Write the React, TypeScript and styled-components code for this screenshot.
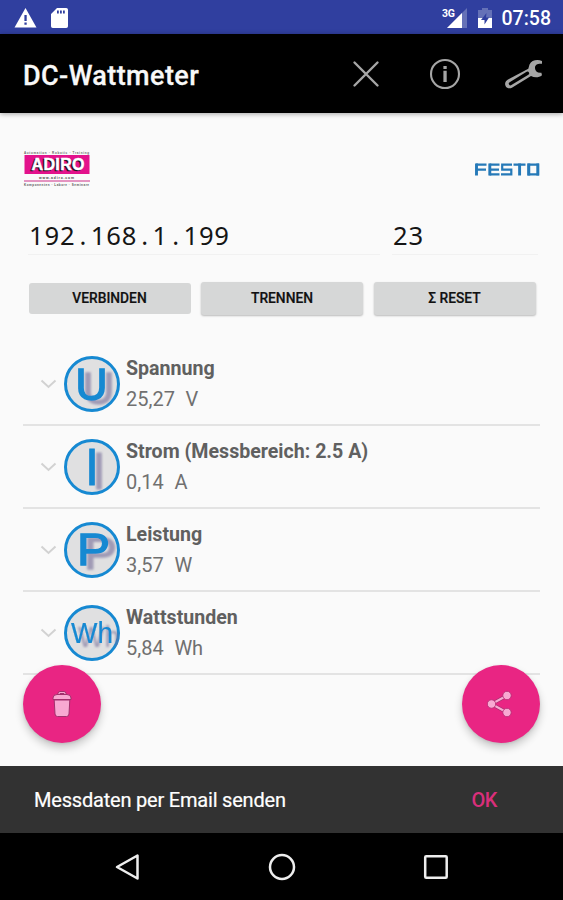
import React from "react";
import styled, { createGlobalStyle } from "styled-components";

const GlobalStyle = createGlobalStyle`
  * { box-sizing: border-box; }
  body { margin: 0; background: #fafafa; font-family: Roboto, sans-serif; }
`;

const Screen = styled.div`
  width: 563px;
  height: 900px;
  display: flex;
  flex-direction: column;
  background: #fafafa;
  overflow: hidden;
`;

const StatusBar = styled.header`
  height: 34px;
  flex: none;
  display: flex;
  align-items: center;
  justify-content: space-between;
  padding: 2px 12px 0 14px;
  background: #303f9f;
`;

const StatusIcons = styled.div<{ $gap: number }>`
  display: flex;
  align-items: center;
  gap: ${(p) => p.$gap}px;
`;

const Clock = styled.span`
  color: #fff;
  font-size: 19.5px;
  font-weight: 500;
  line-height: 24px;
  padding-top: 2px;
`;

const AppBar = styled.div`
  height: 79px;
  flex: none;
  display: flex;
  align-items: center;
  justify-content: space-between;
  padding: 0 20px 0 23px;
  background: #000;
  box-shadow: 0 1px 5px rgba(0, 0, 0, 0.35);
  z-index: 1;
`;

const Title = styled.h1`
  margin: 4px 0 0;
  color: #f8f8f8;
  font-size: 27px;
  font-weight: 500;
  line-height: 32px;
  letter-spacing: 0.4px;
  -webkit-text-stroke: 0.3px #f8f8f8;
`;

const Actions = styled.div`
  display: flex;
  align-items: center;
`;

const IconButton = styled.button`
  width: 79px;
  display: flex;
  justify-content: center;
  padding: 0;
  border: 0;
  background: none;

  &:last-child { margin-right: -20px; }
`;

const Content = styled.main`
  flex: 1;
  position: relative;
  padding: 37px 23px 0;
`;

const Logos = styled.div`
  height: 38px;
  display: flex;
  align-items: center;
  justify-content: space-between;
`;

const Fields = styled.div`
  display: grid;
  grid-template-columns: 352px 146px;
  gap: 12px;
  margin-top: 28px;
  padding-left: 5px;
`;

const Field = styled.div`
  height: 39px;
  border-bottom: 1px solid #f1f1f1;
  padding: 2px 0 0 1px;
  color: #151515;
  font-family: "Noto Sans", sans-serif;
  font-size: 25.6px;
  line-height: 36px;
  letter-spacing: 0.8px;
  white-space: nowrap;
`;

const Dot = styled.span`
  padding: 0 3.6px 0 4.2px;
`;

const Buttons = styled.div`
  display: grid;
  grid-template-columns: repeat(3, 162px);
  gap: 10.5px;
  margin: 27px 0 0 5.5px;
`;

const ActionButton = styled.button<{ $raised?: boolean }>`
  height: ${(p) => (p.$raised ? 33 : 31)}px;
  margin-top: ${(p) => (p.$raised ? 0 : 1)}px;
  padding: 0;
  border: 0;
  border-radius: 3px;
  background: #d6d7d7;
  box-shadow: ${(p) => (p.$raised ? "0 1px 2px rgba(0,0,0,0.26)" : "none")};
  color: #111;
  font-family: Roboto, sans-serif;
  font-size: 13.8px;
  font-weight: 500;
  line-height: 31px;
  -webkit-text-stroke: 0.2px #111;
`;

const List = styled.ul`
  margin: 28px 0 0;
  padding: 0;
  list-style: none;
`;

const Row = styled.li`
  height: 83px;
  display: flex;
  align-items: center;
  padding-left: 17px;
  border-bottom: 2px solid #e3e3e3;
`;

const Reading = styled.div`
  margin-left: 6px;
  font-size: 20px;
  line-height: 30px;
  white-space: pre;
`;

const Name = styled.div`
  color: #606060;
  font-weight: 700;
  font-size: 19.6px;
`;

const Value = styled.div`
  color: #707070;
  font-size: 20px;
  word-spacing: 0.4px;
`;

const BadgeIcon = styled.svg`
  margin-left: 7px;
  flex: none;
`;

const Fab = styled.button<{ $side: "left" | "right" }>`
  position: absolute;
  top: 551.5px;
  ${(p) => p.$side}: 23px;
  width: 78px;
  height: 78px;
  display: flex;
  align-items: center;
  justify-content: center;
  padding: 0;
  border: 0;
  border-radius: 50%;
  background: #e92583;
  box-shadow: 0 5px 8px rgba(0, 0, 0, 0.2), 0 1px 3px rgba(0, 0, 0, 0.1);
`;

const Snackbar = styled.div`
  height: 67px;
  flex: none;
  display: flex;
  align-items: center;
  justify-content: space-between;
  padding: 1px 66px 0 34px;
  background: #323232;
  color: #fff;
  font-size: 20px;
  line-height: 26px;
`;

const Message = styled.span`
  letter-spacing: -0.2px;
  -webkit-text-stroke: 0.2px #fff;
`;

const Confirm = styled.button`
  padding: 0;
  border: 0;
  background: none;
  color: #d92f7b;
  font-family: Roboto, sans-serif;
  font-size: 20px;
  font-weight: 500;
  line-height: 26px;
  letter-spacing: -0.5px;
`;

const NavBar = styled.nav`
  height: 67px;
  flex: none;
  display: flex;
  align-items: center;
  justify-content: space-between;
  padding: 0 113px;
  background: #000;
`;

const WarningIcon = () => (
  <svg width="23" height="22" viewBox="0 0 23 22">
    <path d="M11.5 1L22.5 20.5H.5z" fill="#fff" />
    <path d="M10.4 8h2.3v6h-2.3zM10.4 15.5h2.3v2.3h-2.3z" fill="#303f9f" />
  </svg>
);

const CardIcon = () => (
  <svg width="17" height="22" viewBox="0 0 17 22">
    <path d="M6 1h9.2Q17 1 17 2.8v16.4q0 1.8-1.8 1.8H1.8Q0 21 0 19.2V7z" fill="#fff" />
    <path d="M6 3.5h1.8v3H6zM9 3.5h1.8v3H9zM12 3.5h1.8v3H12z" fill="#303f9f" />
  </svg>
);

const SignalIcon = () => (
  <svg width="26" height="24" viewBox="0 0 26 24">
    <path d="M25 2v20H5z" fill="#6571b7" />
    <path d="M20 7v15H5z" fill="#fff" />
    <text x="0" y="10.5" fontFamily="Roboto, sans-serif" fontSize="10.5" fontWeight="700" fill="#fff" textLength="13">3G</text>
  </svg>
);

const BatteryIcon = () => (
  <svg width="14" height="22" viewBox="0 0 14 22">
    <path d="M4 1h6v2h4v8H0V3h4z" fill="#6571b7" />
    <path d="M0 11h14v10H0z" fill="#fff" />
    <path d="M8.5 6L3 13h3.5v4.5L11 10.5H8z" fill="#303f9f" />
  </svg>
);

const CloseIcon = () => (
  <svg width="28" height="28" viewBox="0 0 28 28" stroke="#a6a6a6" strokeWidth="2.4" strokeLinecap="round">
    <path d="M2.5 2.5l23 23M25.5 2.5l-23 23" />
  </svg>
);

const InfoIcon = () => (
  <svg width="32" height="32" viewBox="0 0 32 32">
    <circle cx="16" cy="16" r="14" fill="none" stroke="#a6a6a6" strokeWidth="2.1" />
    <path d="M14.4 8h3.3v3h-3.3zM14.4 12.8h3.3V24h-3.3z" fill="#a6a6a6" />
  </svg>
);

const WrenchIcon = () => (
  <svg width="40" height="30" viewBox="0 0 40 30">
    <path
      d="M38 2C33.5 .2 27.5 1 25.5 5.5L24.3 9.800 4 20.500C1.200 22.300 .4 24.800 1.700 27.200c1.300 2.200 4 2.700 6.600 1.200L27 17c3.500 1.900 8 1.700 11-.8l-.6-2.400c-4 .5-6.200-1.600-6.400-4.600-.2-3.200 2-4.800 7-4.500z"
      fill="#a6a6a6"
    />
    <path d="M6.500 24.600L23.500 14.300" stroke="#000" strokeWidth="3.4" strokeLinecap="round" />
  </svg>
);

const AdiroLogo = () => (
  <svg width="67" height="38" viewBox="0 0 67 38" fontFamily="Liberation Sans, sans-serif">
    <text x="1" y="3.7" fontSize="3" fontWeight="700" fill="#666" textLength="65">Automation · Robotic · Training</text>
    <rect x="1.5" y="5" width="65" height="19" fill="#e3128c" />
    <g fontSize="16" fontWeight="700" strokeWidth=".5">
      <text transform="translate(7 21)" fill="#241020" stroke="#241020" textLength="53">ADIRO</text>
      <text transform="translate(8.5 19.5)" fill="#fff" stroke="#fff" textLength="53">ADIRO</text>
    </g>
    <text x="16" y="28.5" fontSize="3.4" fontWeight="700" fill="#444" textLength="35">www.adiro.com</text>
    <path d="M1 31h66" stroke="#dc72ae" strokeWidth="1.3" />
    <text x="1" y="36" fontSize="3" fontWeight="700" fill="#555" textLength="65">Komponenten · Labore · Seminare</text>
  </svg>
);

const FestoLogo = () => (
  <svg width="66" height="13" viewBox="0 0 66 13" role="img" aria-label="FESTO" fill="none" stroke="#2579b8">
    <path
      strokeWidth="2.2"
      d="M2 1.700h10.500M3 6.700h9M15.500 1.700h10M15.500 6.700h9.500M15.500 11.300h10M38 1.700H28.200v5H37.300v4.600H27M39.500 1.700h12M54.500 1.700H64v9.600H54.500z"
    />
    <path strokeWidth="2.9" d="M2.500 .6V12.400M15.800 .6v11.800M45.600 .6V12.400M54.800 .6v11.800M63.800 .6v11.800" />
  </svg>
);

const Chevron = () => (
  <svg width="17" height="11" viewBox="0 0 17 11">
    <path d="M1.5 2.5l7 6.500 7-6.500" fill="none" stroke="#d2d2d2" strokeWidth="2" />
  </svg>
);

type Glyph = "U" | "I" | "P" | "Wh";

const glyphStyle: Record<Glyph, { size: number; x: number; y: number; width: number; bold: number }> = {
  U: { size: 45, x: 11.5, y: 45, width: 32, bold: 1.6 },
  I: { size: 51, x: 21, y: 47, width: 14, bold: 0.8 },
  P: { size: 44, x: 13, y: 44, width: 33, bold: 1.4 },
  Wh: { size: 29, x: 7, y: 39, width: 42, bold: 0.2 },
};

const Badge = ({ glyph }: { glyph: Glyph }) => {
  const g = glyphStyle[glyph];
  const id = `badge-${glyph}`;
  return (
    <BadgeIcon width="56" height="58" viewBox="0 0 56 58">
      <defs>
        <filter id={id} x="-20%" y="-20%" width="180%" height="150%">
          <feDropShadow dx="7" dy="4" stdDeviation="1.2" floodColor="#746c98" floodOpacity=".6" />
        </filter>
        <clipPath id={`${id}-clip`}><circle cx="28" cy="29" r="28" /></clipPath>
      </defs>
      <circle cx="28" cy="29" r="26.5" fill="#e0e0e1" stroke="#1689d2" strokeWidth="3" />
      <g clipPath={`url(#${id}-clip)`}>
        <text
          x={g.x}
          y={g.y}
          fontFamily="Liberation Sans, sans-serif"
          fontSize={g.size}
          fill="#1689d2"
          stroke="#1689d2"
          strokeWidth={g.bold}
          textLength={g.width}
          lengthAdjust="spacingAndGlyphs"
          filter={`url(#${id})`}
        >
          {glyph}
        </text>
      </g>
    </BadgeIcon>
  );
};

const TrashIcon = () => (
  <svg width="20" height="28" viewBox="0 0 20 28" fill="#f8a9d2" stroke="#a2316d" strokeWidth="1">
    <path d="M6 5V3.5Q6 1.500 8 1.500h4q2 0 2 2V5h-2V3.500H8V5z" />
    <path d="M2.200 10h15.600L17 24q-.2 2.500-2.500 2.500H5.500q-2.300 0-2.500-2.500z" />
    <path d="M1 9.500V8q0-3.500 4-3.500h10q4 0 4 3.500v1.500z" />
  </svg>
);

const ShareIcon = () => (
  <svg width="28" height="28" viewBox="0 0 28 28" fill="#f8a9d2">
    <path d="M20 5.5L4.500 14 20 22.500" fill="none" stroke="#a2316d" strokeWidth="3.5" />
    <path d="M20 5.5L4.500 14 20 22.500" fill="none" stroke="#f8a9d2" strokeWidth="2" />
    <g stroke="#b32670" strokeWidth=".8">
      <circle cx="4.5" cy="14" r="4.2" />
      <circle cx="20" cy="5.5" r="4.2" />
      <circle cx="20" cy="22.5" r="4.2" />
    </g>
  </svg>
);

const readings: { glyph: Glyph; name: string; value: string }[] = [
  { glyph: "U", name: "Spannung", value: "25,27  V" },
  { glyph: "I", name: "Strom (Messbereich: 2.5 A)", value: "0,14  A" },
  { glyph: "P", name: "Leistung", value: "3,57  W" },
  { glyph: "Wh", name: "Wattstunden", value: "5,84  Wh" },
];

export default function App() {
  return (
    <>
      <GlobalStyle />
      <Screen>
        <StatusBar>
          <StatusIcons $gap={14}><WarningIcon /><CardIcon /></StatusIcons>
          <StatusIcons $gap={10}><SignalIcon /><BatteryIcon /><Clock>07:58</Clock></StatusIcons>
        </StatusBar>
        <AppBar>
          <Title>DC-Wattmeter</Title>
          <Actions>
            <IconButton aria-label="Schließen"><CloseIcon /></IconButton>
            <IconButton aria-label="Info"><InfoIcon /></IconButton>
            <IconButton aria-label="Einstellungen"><WrenchIcon /></IconButton>
          </Actions>
        </AppBar>
        <Content>
          <Logos><AdiroLogo /><FestoLogo /></Logos>
          <Fields>
            <Field>192<Dot>.</Dot>168<Dot>.</Dot>1<Dot>.</Dot>199</Field>
            <Field>23</Field>
          </Fields>
          <Buttons>
            <ActionButton>VERBINDEN</ActionButton>
            <ActionButton $raised>TRENNEN</ActionButton>
            <ActionButton $raised>Σ RESET</ActionButton>
          </Buttons>
          <List>
            {readings.map((r) => (
              <Row key={r.glyph}>
                <Chevron />
                <Badge glyph={r.glyph} />
                <Reading>
                  <Name>{r.name}</Name>
                  <Value>{r.value}</Value>
                </Reading>
              </Row>
            ))}
          </List>
          <Fab $side="left" aria-label="Löschen"><TrashIcon /></Fab>
          <Fab $side="right" aria-label="Teilen"><ShareIcon /></Fab>
        </Content>
        <Snackbar>
          <Message>Messdaten per Email senden</Message>
          <Confirm>OK</Confirm>
        </Snackbar>
        <NavBar>
          <svg width="28" height="28" viewBox="0 0 28 28" fill="none" stroke="#eee" strokeWidth="2.5">
            <path d="M24.5 2.500v23L4 14z" strokeLinejoin="round" />
          </svg>
          <svg width="28" height="28" viewBox="0 0 28 28" fill="none" stroke="#eee" strokeWidth="2.5">
            <circle cx="14" cy="14" r="12" />
          </svg>
          <svg width="28" height="28" viewBox="0 0 28 28" fill="none" stroke="#eee" strokeWidth="2.5">
            <rect x="3.2" y="3.2" width="21.5" height="21.5" rx="1" />
          </svg>
        </NavBar>
      </Screen>
    </>
  );
}
